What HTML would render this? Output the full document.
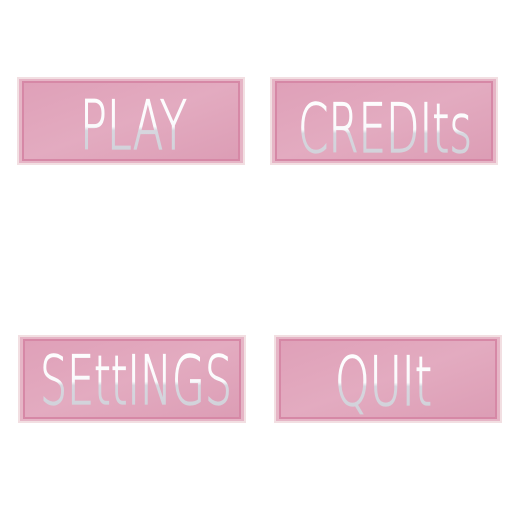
<!DOCTYPE html>
<html><head><style>
html,body{margin:0;padding:0;background:#fff;width:512px;height:512px;overflow:hidden}
</style></head><body>
<svg width="512" height="512" viewBox="0 0 512 512" xmlns="http://www.w3.org/2000/svg">
<defs>
<linearGradient id="t" x1="0" y1="0" x2="0" y2="1">
<stop offset="0" stop-color="#ffffff"/><stop offset="0.5" stop-color="#fafafc"/><stop offset="0.55" stop-color="#d6d6de"/><stop offset="1" stop-color="#cfd0d8"/>
</linearGradient>
<linearGradient id="f" x1="0" y1="0" x2="1" y2="1">
<stop offset="0" stop-color="#dfa0b8"/><stop offset="0.5" stop-color="#e3abc0"/><stop offset="1" stop-color="#dc9db5"/>
</linearGradient>
<g id="btn">
<rect x="0" y="0" width="228" height="88" fill="#f2dfe2"/>
<rect x="2" y="2" width="224" height="84" fill="#e6b5c6"/>
<rect x="6" y="5" width="216" height="78" fill="url(#f)" stroke="#d688a6" stroke-width="2"/>
</g>
</defs>
<use href="#btn" x="17" y="77"/>
<use href="#btn" x="270" y="77"/>
<use href="#btn" x="18" y="335"/>
<use href="#btn" x="274" y="335"/>
<g font-family="DejaVu Sans ExtraLight, DejaVu Sans, sans-serif" font-weight="200" font-size="68" fill="url(#t)" stroke="url(#t)" stroke-width="1.2">
<text x="80" y="149" textLength="107" lengthAdjust="spacingAndGlyphs">PLAY</text>
<text x="298" y="152" textLength="174" lengthAdjust="spacingAndGlyphs">CREDIts</text>
<text x="40" y="404" textLength="192" lengthAdjust="spacingAndGlyphs">SEttINGS</text>
<text x="335" y="405" textLength="97" lengthAdjust="spacingAndGlyphs">QUIt</text>
</g>
</svg>
</body></html>
